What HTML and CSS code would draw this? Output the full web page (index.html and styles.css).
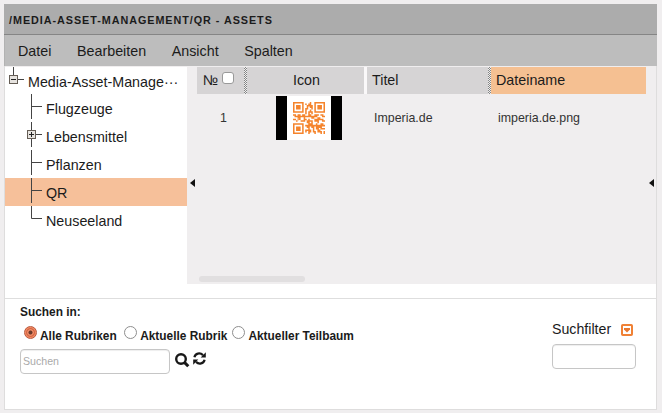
FILE: index.html
```html
<!DOCTYPE html>
<html lang="de">
<head>
<meta charset="utf-8">
<title>Media-Asset-Management</title>
<link rel="stylesheet" href="styles.css">
</head>
<body>
<main class="window">
  <h1 class="title">/MEDIA-ASSET-MANAGEMENT/QR - ASSETS</h1>
  <nav class="menu"><span>Datei</span><span>Bearbeiten</span><span>Ansicht</span><span>Spalten</span></nav>
  <div class="content">
    <ul class="tree">
      <li class="root"><svg width="23" height="27"><path d="M8.500 0V9M13 12.500H19" class="line"/><rect x="4.500" y="8.500" width="8" height="8" class="box"/><path d="M6 12.500H11" class="sign"/></svg><span>Media-Asset-Manage</span><span class="dots">···</span></li>
      <li><svg width="15" height="28"><path d="M.500 0V25M0 12.500H11" class="line"/></svg>Flugzeuge</li>
      <li class="closed"><svg width="19" height="28"><path d="M4.500 0V25M9 12.500H15" class="line"/><rect x=".500" y="8.500" width="8" height="8" class="box"/><path d="M2 12.500H7M4.500 10V15" class="sign"/></svg>Lebensmittel</li>
      <li><svg width="15" height="28"><path d="M.500 0V25M0 12.500H11" class="line"/></svg>Pflanzen</li>
      <li class="selected"><svg width="15" height="28"><path d="M.500 0V25M0 12.500H11" class="line"/></svg>QR</li>
      <li><svg width="15" height="28"><path d="M.500 0V12.500H11" class="line"/></svg>Neuseeland</li>
    </ul>
    <div class="handle"><svg width="5" height="8"><path d="M5 0V8L0 4Z"/></svg></div>
    <section class="list">
      <div class="row head">
        <div class="num">№<i class="check"></i></div><div class="grip"></div><div class="icon">Icon</div><div class="gap"></div><div class="name">Titel</div><div class="grip"></div><div class="file">Dateiname</div>
      </div>
      <div class="row item">
        <div class="num">1</div><div class="grip-space"></div>
        <div class="icon"><div class="thumb"><svg width="32" height="32" viewBox="0 0 21 21" fill="#f5842c">
          <path fill-rule="evenodd" d="M0 0H7V7H0ZM1 1V6H6V1ZM2 2H5V5H2ZM14 0H21V7H14ZM15 1V6H20V1ZM16 2H19V5H16ZM0 14H7V21H0ZM1 15V20H6V15ZM2 16H5V19H2Z"/>
          <path d="M11 0H12V2H13V5H12V4H11V3H10V5H9V6H8V4H9V2H10V1H11ZM8 1H9V2H8ZM10 6H11V5H12V6H13V8H12V7H11V8H10ZM8 6H9V8H8ZM0 8H2V9H3V8H5V9H6V8H8V9H10V10H8V11H7V10H5V11H3V10H1V9H0ZM0 11H2V12H0ZM3 11V13H2V12H4V11H5V12H7V11H9V12H8V13H5V12ZM10 8H12V9H14V8H17V9H16V10H14V11H12V10H10ZM18 8H20V9H21V10H19V9H18ZM10 11H11V12H13V13H11V14H9V12H10ZM14 11H16V10H18V11H20V12H21V13H19V12H17V14H16V13H14ZM8 15H10V14H12V13H13V15H14V17H12V16H11V17H9V16H8ZM15 14H16V15H18V14H20V15H21V16H19V17H20V18H18V17H17V18H15V16H14V15H15ZM8 18H10V17H11V18H12V20H11V21H10V19H9V20H8ZM13 17H14V19H15V21H14V20H13ZM16 18H18V19H19V21H18V20H16ZM20 17H21V18H20ZM20 19H21V21H20Z"/>
        </svg></div></div>
        <div class="gap"></div><div class="name">Imperia.de</div><div class="grip-space"></div><div class="file">imperia.de.png</div>
      </div>
      <div class="scroll"></div>
    </section>
    <div class="handle"><svg width="5" height="8"><path d="M5 0V8L0 4Z"/></svg></div>
  </div>
  <footer class="search">
    <div class="scope">
      <b>Suchen in:</b>
      <div class="radios"><i class="radio on"></i><b class="a">Alle Rubriken</b><i class="radio"></i><b class="b">Aktuelle Rubrik</b><i class="radio"></i><b>Aktueller Teilbaum</b></div>
      <div class="query"><div class="field">Suchen</div>
        <svg class="lens" width="15" height="15" fill="none" stroke="#181818"><circle cx="6" cy="6" r="4.800" stroke-width="2.400"/><path d="M9.400 9.400L13.300 13.300" stroke-width="3"/></svg>
        <svg width="13" height="13" viewBox="0 0 13 13"><path d="M1.400 5.200C2.300 1.200 7 .200 10 3.100M11.600 7.800C10.700 11.800 6 12.800 3 9.900" fill="none" stroke="#181818" stroke-width="2.200"/><path d="M12.800 .300V5.400H7.700ZM.200 12.700V7.600H5.300Z" fill="#181818"/></svg>
      </div>
    </div>
    <div class="filter"><div class="label">Suchfilter<svg width="12" height="12"><rect x="1" y="1" width="10" height="10" rx=".800" fill="#fff" stroke="#f08135" stroke-width="2"/><path d="M3 4H9V5.500L6 8.500L3 5.500Z" fill="#e87830"/></svg></div><div class="field small"></div></div>
  </footer>
</main>
</body>
</html>
```
FILE: styles.css
```css
* { box-sizing: border-box; }
body { margin: 0; padding: 4px 5px 0 4px; height: 413px; overflow: hidden; background: #f0eeef; color: #1b1b1b; font: 14.3px "Liberation Sans", Arial, sans-serif; }
svg { display: block; flex: none; }
.window { width: 653px; height: 406px; background: #fff; border: solid #dedddd; border-width: 0 1px 1px; }
.title { margin: 0 -1px; height: 31px; padding-left: 5px; background: #acacac; border-bottom: 1px solid #858585; font-size: 10.8px; line-height: 32px; letter-spacing: .95px; white-space: nowrap; }
.menu { margin: 0 -1px; height: 31px; display: flex; gap: 25.6px; background: #bdbdbd; border-left: 1px solid #b2b2b2; padding-left: 13px; line-height: 32px; }
.content { display: flex; height: 218px; background: #f0eeef; }
.tree { width: 182px; margin: 1px 0 0; padding: 0; list-style: none; background: #fff; }
.tree li { display: flex; height: 28px; padding-left: 26px; line-height: 30px; }
.tree .root { height: 27px; padding-left: 0; }
.tree .closed { padding-left: 22px; }
.tree .selected { background: #f6c09a; }
.line { fill: none; stroke: #444; }
.box { fill: #e6e3df; stroke: #655d55; }
.sign { stroke: #222; }
.handle { width: 10px; padding: 113px 0 0 3px; fill: #111; }
.list { width: 449px; }
.row { display: flex; }
.head { margin-top: 1px; height: 27px; line-height: 27px; }
.head > div { background: #d6d4d5; }
.num { width: 47px; display: flex; }
.head .num { padding-left: 6px; }
.check { width: 12px; height: 12px; margin: 5px 0 0 4px; border: 1px solid #999; border-radius: 3px; background: #fff; }
.grip, .grip-space { width: 3px; }
.head .grip { background: repeating-conic-gradient(#858585 0 25%, #efefef 0 50%) 0 0 / 2px 2px; }
.icon { width: 117px; }
.head .icon { padding-left: 46px; }
.gap { width: 3px; }
.head .gap { background: #faf8f9; }
.name { width: 121px; padding-left: 5px; }
.file { width: 155px; padding-left: 5px; }
.head .file { background: #f5c092; }
.item { height: 47px; font-size: 12.4px; line-height: 49px; color: #333; }
.item .num { padding-left: 23px; }
.item .name, .item .file { padding-left: 7px; }
.thumb { width: 66px; height: 44px; margin: 2px 0 0 29px; padding: 6px; display: flex; background: #fff; border: solid #000; border-width: 0 11px; }
.scroll { width: 106px; height: 6px; margin: 135px 0 0 2px; border-radius: 3px; background: #e1dfe0; }
.search { display: flex; justify-content: space-between; height: 111px; margin-top: 14px; padding: 7px 20px 0 15px; border-top: 1px solid #dedede; font-size: 11.9px; }
.scope > b { display: block; line-height: 13px; }
.radios { display: flex; height: 24px; padding: 8px 0 0 4px; line-height: 19px; white-space: nowrap; }
.radio { flex: none; width: 13px; height: 13px; margin: -1px 3.5px 0 -.5px; border: 1px solid #8e8e8e; border-radius: 50%; background: #fff; }
.on { background: radial-gradient(circle, #6b3a2b 0 1.6px, #f08a66 2.4px 3px, #c8603f 3.8px, #f58a62 4.8px); border-color: #b75a40; }
.a { margin-right: 7.5px; }
.b { margin-right: 5px; }
.query { display: flex; margin-top: 6px; }
.field { width: 150px; height: 25px; padding-left: 2px; border: 1px solid #c6c6c6; border-radius: 4px; box-shadow: inset 0 1px 1px #eee; background: #fff; color: #aaa; font-size: 10.6px; line-height: 23px; }
.field.small { width: 84px; }
.lens { margin: 4px 3px 0 5px; }
.lens + svg { margin-top: 3px; }
.filter { width: 84px; padding-top: 14px; font-size: 14.2px; }
.label { display: flex; gap: 10px; height: 24px; line-height: 18px; }
.label svg { margin-top: 4px; }
```
